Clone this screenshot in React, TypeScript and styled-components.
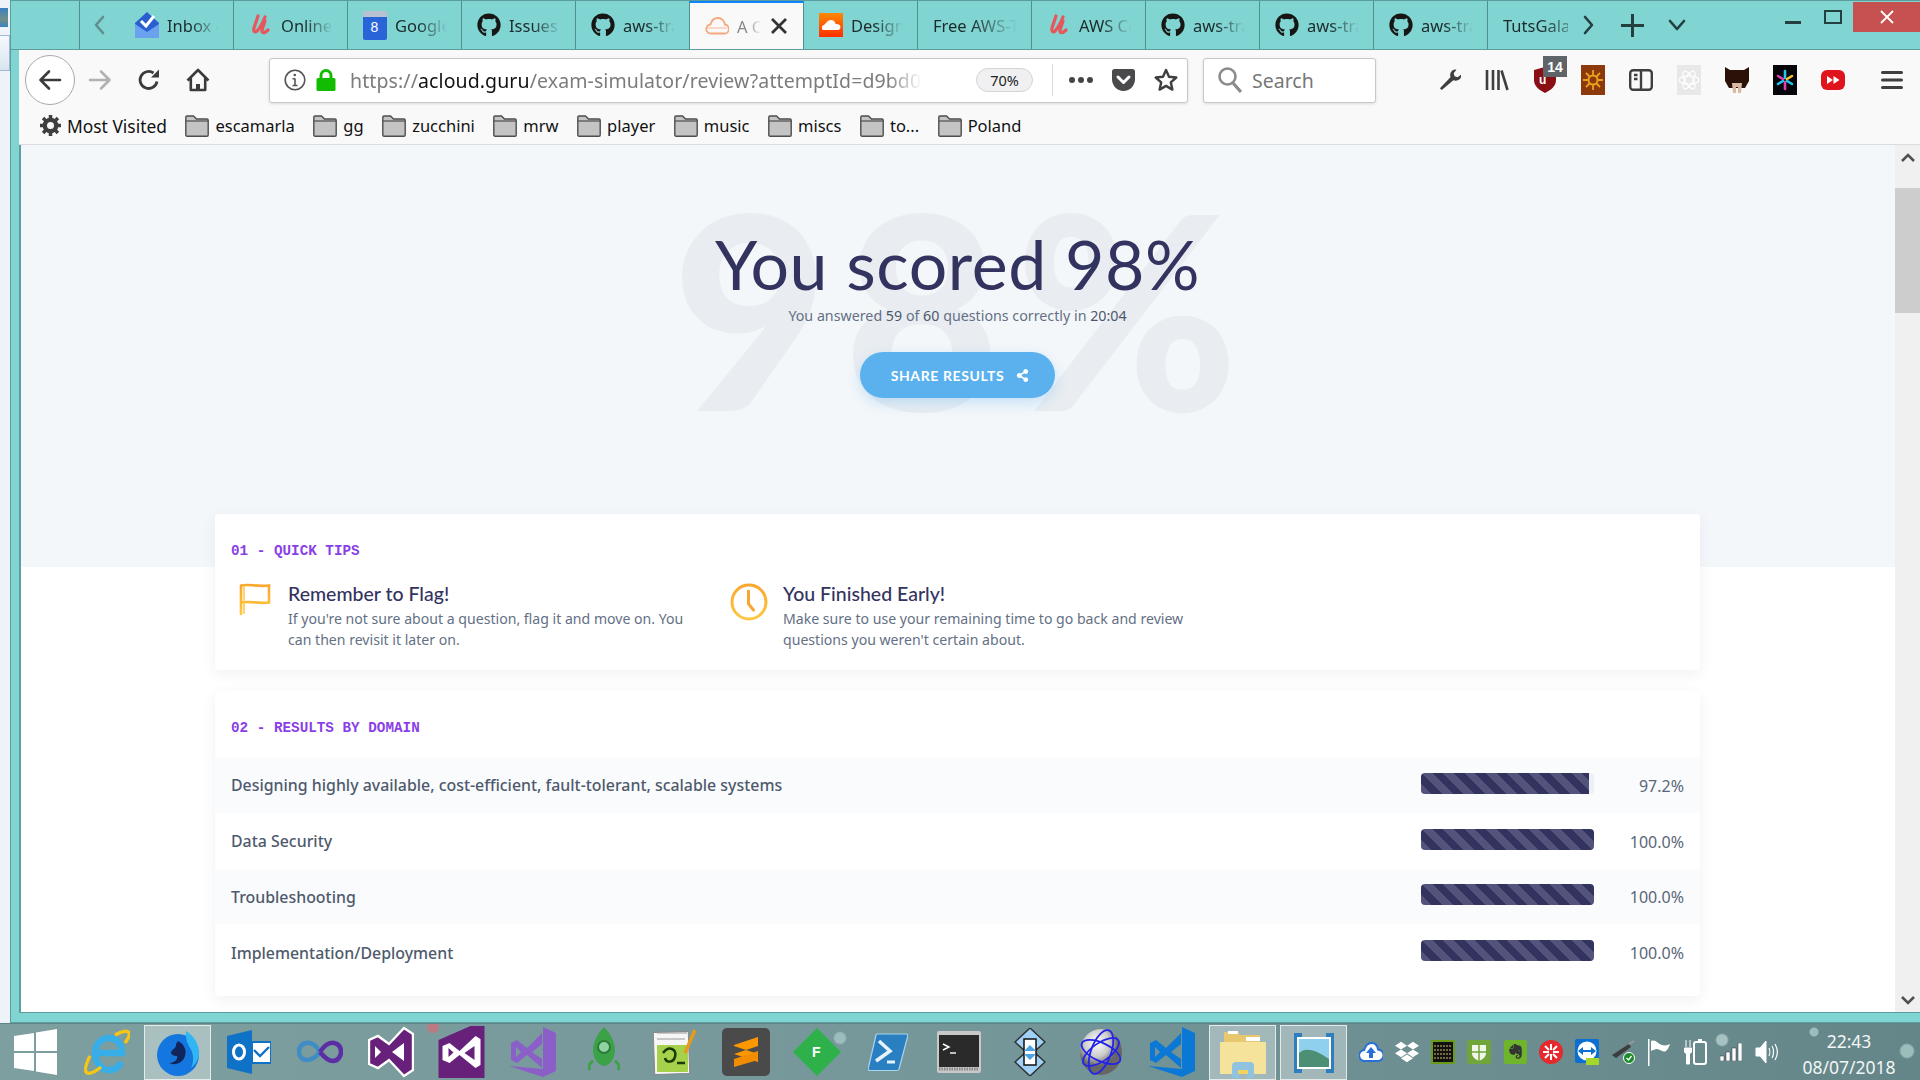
import React from "react";
import styled, { createGlobalStyle } from "styled-components";
import { FaGithub, FaEvernote, FaDropbox, FaShareAlt } from "react-icons/fa";

const Global = createGlobalStyle`
  html, body { margin: 0; padding: 0; height: 1080px; overflow: hidden; background: #7b9c9e; }
  * { box-sizing: border-box; }
  #root { width: 1920px; height: 1080px; }
`;

const UI = `"Noto Sans", "Open Sans", sans-serif`;
const HEAD = `Lato, "Noto Sans", sans-serif`;

const Desktop = styled.div`
  width: 1920px; height: 1080px; display: flex; flex-direction: column; overflow: hidden; font-family: ${UI};
`;
const Top = styled.div`flex: 0 0 1023px; display: flex; min-height: 0;`;
const Behind = styled.div`
  flex: 0 0 10px; background: #eef3fa; display: flex; flex-direction: column; gap: 8px; padding-top: 8px;
`;
const BehindIcon = styled.div`height: 19px; width: 8px; background: linear-gradient(#3a80c0, #6f8f88 60%, #3a80c0);`;
const BehindPanel = styled.div`height: 36px; width: 10px; background: linear-gradient(#f6f9fc, #d9e4f0); border: 1px solid #9fb8d6; border-left: 0;`;
const Win = styled.div`
  flex: 1; display: flex; flex-direction: column; background: #80d4d2; min-width: 0;
  border-left: 1px solid #5c9c9c; border-top: 1px solid #5c9c9c; border-bottom: 1px solid #5c9c9c;
`;
const Strip = styled.div`flex: 0 0 49px; display: flex; padding-left: 68px; position: relative; border-bottom: 1px solid #5c9c9c;`;
const ScrollBtn = styled.div`
  flex: 0 0 41px; border-left: 1px solid #4f8f90; display: flex; align-items: center; justify-content: center;
`;
const TabsClip = styled.div`flex: 0 0 1448px; display: flex; overflow: hidden;`;
const Tab = styled.div<{ $active?: boolean }>`
  flex: 0 0 114px; display: flex; align-items: center; gap: 8px; padding: 0 14px 0 15px; overflow: hidden;
  border-right: 1px solid #4f8f90;
  background: ${(p) => (p.$active ? "#f9f9fa" : "transparent")};
  border-top: ${(p) => (p.$active ? "3px solid #0a84ff" : "0")};
  margin-top: ${(p) => (p.$active ? "-1px" : "0")};
  position: relative;
`;
const TabText = styled.span<{ $active?: boolean }>`
  font-size: 16.5px; white-space: nowrap; overflow: hidden; flex: 1; color: ${(p) => (p.$active ? "#888" : "#1c2b2b")};
  -webkit-mask-image: linear-gradient(90deg, #000 45%, transparent 100%);
  mask-image: linear-gradient(90deg, #000 45%, transparent 100%);
`;
const TabTools = styled.div`display: flex; align-items: center; padding-left: 9px; gap: 22px;`;
const WinBtns = styled.div`margin-left: auto; display: flex; align-self: flex-start;`;
const WinBtn = styled.div<{ $w: number; $close?: boolean }>`
  width: ${(p) => p.$w}px; height: 30px; display: flex; align-items: center; justify-content: center; margin-top: 1px;
  background: ${(p) => (p.$close ? "#c75050" : "transparent")};
`;
const Body = styled.div`flex: 1; margin: 0 0 9px 8px; display: flex; flex-direction: column; background: #f9f9fa; min-height: 0; border-bottom: 1px solid #5c9c9c;`;
const NavBar = styled.div`flex: 0 0 54px; display: flex; align-items: center; padding-left: 6px; position: relative;`;
const BackCircle = styled.div`
  flex: 0 0 50px; height: 50px; border-radius: 50%; background: #fff; border: 1px solid #a9a9ab;
  display: flex; align-items: center; justify-content: center; margin-top: 5px;
`;
const NavIcons = styled.div`display: flex; align-items: center; margin-left: 13px; gap: 25px; width: 181px; margin-top: 5px;`;
const Field = styled.div<{ $w: number }>`
  flex: 0 0 ${(p) => p.$w}px; height: 45px; background: #fff; border: 1px solid #c8c8ca; border-radius: 3px; margin-top: 5px;
  display: flex; align-items: center; box-shadow: 0 1px 3px rgba(0,0,0,.12);
`;
const UrlIcons = styled.div`display: flex; align-items: center; gap: 10px; margin-left: 14px;`;
const UrlText = styled.div`
  font-size: 19.5px; margin-left: 14px; width: 572px; overflow: hidden; white-space: nowrap; color: #7c7c7f; letter-spacing: .1px;
  -webkit-mask-image: linear-gradient(90deg, #000 94%, transparent 100%);
  mask-image: linear-gradient(90deg, #000 94%, transparent 100%);
`;
const UrlHost = styled.span`color: #111;`;
const Zoom = styled.div`
  margin-left: 54px; flex: 0 0 57px; height: 24px; border-radius: 12px; background: #f0f0f2; border: 1px solid #d4d4d6;
  font-size: 14.5px; display: flex; align-items: center; justify-content: center; color: #222;
`;
const VDivider = styled.div`flex: 0 0 1px; height: 32px; background: #dcdcde; margin: 0 16px 0 19px;`;
const UrlTail = styled.div`display: flex; align-items: center; gap: 18px;`;
const SearchLabel = styled.span`font-size: 19.5px; color: #777;`;
const SearchGap = styled.div`width: 15px;`;
const ToolIcons = styled.div`display: flex; margin-left: 63px; width: 437px; align-items: center; gap: 24px;`;
const ToolWrap = styled.div`position: relative; width: 24px; height: 30px; display: flex; align-items: center; justify-content: center; margin-top: 5px;`;
const Badge = styled.span`
  position: absolute; left: 10px; top: -9px; width: 24px; height: 21px; background: #5f6468; color: #fff;
  font: bold 14px "Liberation Sans", sans-serif; display: flex; align-items: center; justify-content: center;
`;
const ToolSep = styled.div`width: 1px; height: 50px; background: #e4e4e6; margin-left: -8px; margin-right: -4px; margin-top: 4px;`;
const BookBar = styled.div`
  flex: 0 0 40px; display: flex; align-items: center; padding: 2px 0 0 21px; gap: 18.5px; border-bottom: 1px solid #dcdcde;
`;
const Book = styled.div`display: flex; align-items: center; gap: 6px; font-size: 16.5px; color: #111;`;
const MostVisited = styled(Book)`font-size: 17.4px;`;

const View = styled.div`flex: 1; display: flex; min-height: 0; background: #fff; border-left: 2px solid #5f9ea0;`;
const Page = styled.div`flex: 1; min-width: 0; overflow: hidden; display: flex; flex-direction: column; padding-right: 1px;`;
const Hero = styled.div`
  flex: 0 0 422px; margin-right: -1px; background: #f4f7fa; position: relative; display: flex; flex-direction: column; align-items: center; overflow: hidden;
  padding: 79px 1px 0 0;
`;
const Ghost = styled.div`
  position: absolute; left: 651px; top: 27px; font: 900 270px/1 ${HEAD}; color: #e9edf1; white-space: nowrap; letter-spacing: 15px;
`;
const Title = styled.h1`
  position: relative; margin: 0; font: 400 68px/80px ${HEAD}; color: #33335f; height: 80px; white-space: nowrap; letter-spacing: .6px;
`;
const Sub = styled.p`position: relative; margin: .5px 0 0; font-size: 14.25px; line-height: 22px; color: #647084;`;
const SubStrong = styled.span`color: #4d586b;`;
const Share = styled.div`
  position: relative; margin-top: 25.5px; width: 195px; height: 46px; border-radius: 23px; background: #5ab1ee; color: #fff;
  box-shadow: 0 5px 14px rgba(90,177,238,.3); padding-left: 5px;
  font: 700 14px ${HEAD}; letter-spacing: .6px; display: flex; align-items: center; justify-content: center; gap: 12px;
`;
const Cards = styled.div`width: 1485px; align-self: center; margin-top: -53px; display: flex; flex-direction: column; gap: 21px; position: relative;`;
const Card = styled.section<{ $h: number }>`
  height: ${(p) => p.$h}px; flex: none; background: #fff; border-radius: 4px; box-shadow: 0 4px 14px rgba(40,50,80,.07); padding-top: 27px;
`;
const Label = styled.h2`
  margin: 0 0 0 16px; font: 700 14.3px/20px "Liberation Mono", monospace; color: #8a3fe6; white-space: pre;
`;
const Tips = styled.div`display: grid; grid-template-columns: 495px 495px; padding-left: 16px; margin-top: 19px;`;
const Tip = styled.div`display: grid; grid-template-columns: 57px 1fr;`;
const TipIcon = styled.div<{ $right: number }>`display: flex; justify-content: flex-end; padding: 3px ${(p) => p.$right}px 0 0;`;
const TipHead = styled.div`font: 500 19.5px/26px ${HEAD}; color: #33335f; white-space: nowrap; margin-top: 1px;`;
const TipBody = styled.div`font-size: 14.1px; line-height: 21px; color: #647084; white-space: nowrap; margin-top: 1px;`;
const Rows = styled.div`margin-top: 19px;`;
const Row = styled.div<{ $odd: boolean }>`
  height: 55.75px; display: flex; align-items: center; padding: 0 16px; background: ${(p) => (p.$odd ? "#fafbfd" : "#fff")};
`;
const RowName = styled.div`flex: 1; font-size: 15.9px; font-weight: 500; color: #4e5a6c; padding-top: 1px;`;
const Track = styled.div`flex: 0 0 173px; height: 21px; border-radius: 4px; background: #eef0f5; overflow: hidden; margin-top: -3px;`;
const Fill = styled.div`
  height: 100%;
  background: repeating-linear-gradient(45deg, #53537b 0, #53537b 7.56px, #33335f 7.56px, #33335f 15.12px);
`;
const Pct = styled.div`flex: 0 0 90px; text-align: right; font-size: 16px; color: #5a6678; padding-top: 2px;`;

const Scroll = styled.div`flex: 0 0 25px; background: #f0f0f0; display: flex; flex-direction: column; align-items: center; justify-content: space-between; position: relative;`;
const ScrollArrow = styled.div`height: 25px; display: flex; align-items: center; justify-content: center;`;
const Thumb = styled.div`position: absolute; left: 0; right: 0; top: 43px; height: 125px; background: #cdcdcd;`;

const Taskbar = styled.div`
  flex: 0 0 57px; display: flex; align-items: stretch; position: relative; border-top: 1px solid #5e8486;
  background:
    radial-gradient(circle at 1722px 16px, #a6c2c2 0 5px, transparent 7px),
    radial-gradient(circle at 1814px 8px, #9dbcbc 0 4px, transparent 5px),
    radial-gradient(circle at 1907px 27px, #9dbcbc 0 6px, transparent 8px),
    radial-gradient(circle at 840px 14px, #9dbcbc 0 5px, transparent 7px),
    radial-gradient(circle at 433px 3px, #b87b84 0 5px, transparent 7px),
    linear-gradient(90deg, #7e9f9f, #75979a 50%, #648688);
`;
const Slot = styled.div<{ $on?: boolean }>`
  flex: 0 0 71px; display: flex; align-items: center; justify-content: center; margin: 0;
  ${(p) => p.$on ? "background: rgba(255,255,255,.35); box-shadow: inset 0 0 0 1px rgba(255,255,255,.7); margin: 1px 2px 0; flex-basis: 67px;" : ""}
`;
const Tray = styled.div`display: flex; align-items: center; margin-left: 4px;`;
const TraySlot = styled.div`flex: 0 0 36px; display: flex; align-items: center; justify-content: center;`;
const Clock = styled.div`
  flex: 1; text-align: center; color: #f2f6f6; font-size: 17.5px; line-height: 26px; padding: 4px 7px 0 0; white-space: nowrap;
`;

const Arrow = ({ c = "#3b3b3d", flip = false, s = 24 }: { c?: string; flip?: boolean; s?: number }) => (
  <svg width={s} height={s} viewBox="0 0 24 24" fill="none" stroke={c} strokeWidth="2.6" strokeLinecap="round" strokeLinejoin="round" style={flip ? { transform: "scaleX(-1)" } : undefined}>
    <path d="M22 12H2.5M11 3.5 2.5 12l8.5 8.5" />
  </svg>
);
const Reload = () => (
  <svg width="24" height="24" viewBox="0 0 24 24" fill="none" stroke="#3b3b3d" strokeWidth="2.8">
    <path d="M20 13.5A8.5 8.5 0 1 1 16.5 5" />
    <path d="M22 1.5v8h-8z" fill="#3b3b3d" stroke="none" />
  </svg>
);
const Home = () => (
  <svg width="24" height="24" viewBox="0 0 24 24" fill="none" stroke="#3b3b3d" strokeWidth="2.6" strokeLinejoin="round">
    <path d="M1.5 12.5 12 2l10.5 10.5M4.8 10v12h14.4V10" />
    <rect x="10" y="16" width="4" height="6" fill="#3b3b3d" stroke="none" />
  </svg>
);
const Folder = () => (
  <svg width="24" height="24" viewBox="0 0 24 24">
    <path d="M.8 21V3.2c0-.8.5-1.2 1.2-1.2h6.5l3 3H22c.8 0 1.2.5 1.2 1.2V21c0 .8-.5 1.2-1.2 1.2H2c-.8 0-1.2-.5-1.2-1.2z" fill="#c4c4c4" stroke="#4d4d4d" strokeWidth="1.4" />
    <path d="M1 7h22" stroke="#4d4d4d" strokeWidth="1.2" />
  </svg>
);
const Gear = () => (
  <svg width="21" height="21" viewBox="0 0 24 24" fill="none" stroke="#3f3f41" strokeWidth="5">
    <circle cx="12" cy="12" r="6.5" />
    <path strokeWidth="4" d="M12 0v5M12 19v5M0 12h5M19 12h5M3.5 3.5l3.5 3.5M17 17l3.5 3.5M3.5 20.5 7 17M17 7l3.5-3.5" />
  </svg>
);
const Info = () => (
  <svg width="22" height="22" viewBox="0 0 22 22" fill="none" stroke="#555" strokeWidth="1.6">
    <circle cx="11" cy="11" r="9.8" />
    <path d="M11 9.5v7M8.5 9.7H11M8.5 16.5h5" />
    <circle cx="10.8" cy="6" r="1.3" fill="#555" stroke="none" />
  </svg>
);
const Lock = () => (
  <svg width="20" height="22" viewBox="0 0 20 22">
    <path d="M5 10V6.5a5 5 0 0 1 10 0V10" fill="none" stroke="#12bc00" strokeWidth="3" />
    <rect x="0.5" y="9" width="19" height="13" rx="1.5" fill="#12bc00" />
  </svg>
);
const Dots = () => (
  <svg width="24" height="6" viewBox="0 0 24 6" fill="#444"><circle cx="3" cy="3" r="3" /><circle cx="12" cy="3" r="3" /><circle cx="21" cy="3" r="3" /></svg>
);
const Pocket = () => (
  <svg width="25" height="24" viewBox="0 0 25 24">
    <path d="M1 3.5C1 2 2 1 3.5 1h18C23 1 24 2 24 3.5V11c0 6.5-5 12-11.5 12S1 17.5 1 11z" fill="#4a4a4d" />
    <path d="M7 9l5.5 5.5L18 9" fill="none" stroke="#fff" strokeWidth="3" strokeLinecap="round" strokeLinejoin="round" />
  </svg>
);
const Star = () => (
  <svg width="24" height="24" viewBox="0 0 24 24" fill="none" stroke="#3f3f41" strokeWidth="2.4" strokeLinejoin="round">
    <path d="m12 2 3 6.8 7.3.7-5.5 4.9 1.6 7.2L12 17.9l-6.4 3.7 1.6-7.2L1.7 9.5 9 8.8z" />
  </svg>
);
const Magnifier = () => (
  <svg width="24" height="26" viewBox="0 0 24 26" fill="none" stroke="#8b8b8e" strokeWidth="2.6">
    <circle cx="9.5" cy="9.5" r="8" />
    <path d="m15 16 8 9" strokeWidth="3.2" />
  </svg>
);
const Wrench = () => (
  <svg width="22" height="24" viewBox="0 0 24 24" fill="#3f3f41">
    <path d="M3 23 1 21l11.5-12c-.8-3 0-5.8 2-7.3 1.5-1 3-1.3 4.5-1l-3 4 1 3.3 3.3 1 4-3c.3 2-.3 3.8-1.6 5-1.9 1.7-4.6 2.2-7 1.3z" />
  </svg>
);
const Library = () => (
  <svg width="24" height="24" viewBox="0 0 24 24" stroke="#3f3f41" strokeWidth="2.6" fill="none">
    <path d="M2 2v20M8 2v20M13.5 2v20M16.5 2.5 22.5 22" />
  </svg>
);
const UBlock = () => (
  <svg width="24" height="26" viewBox="0 0 24 26">
    <path d="M1 3 12 0l11 3v10c0 6-5 10-11 13C6 23 1 19 1 13z" fill="#8a0f12" />
    <text x="6" y="17" fontSize="12" fontWeight="700" fill="#fff" fontFamily="Liberation Sans">u</text>
  </svg>
);
const Sun = () => (
  <svg width="24" height="30" viewBox="0 0 24 30">
    <rect width="24" height="30" fill="#8c3a0c" />
    <circle cx="12" cy="15" r="4.5" fill="none" stroke="#eaa01e" strokeWidth="2" />
    <path d="M12 5v5M12 20v5M2 15h5M17 15h5M5 8l3.5 3.5M15.5 18.5 19 22M5 22l3.5-3.5M15.5 11.5 19 8" stroke="#eaa01e" strokeWidth="1.8" />
  </svg>
);
const Sidebar = () => (
  <svg width="24" height="22" viewBox="0 0 24 22" fill="none" stroke="#3f3f41" strokeWidth="2.4">
    <rect x="1.2" y="1.2" width="21.6" height="19.6" rx="3" />
    <path d="M12 1.5v19M5 6h3.5M5 10h3.5" />
  </svg>
);
const ReactIco = () => (
  <svg width="24" height="30" viewBox="0 0 24 30" fill="none">
    <rect width="24" height="30" fill="#e8e8e8" />
    <g stroke="#fff" strokeWidth="1.2"><ellipse cx="12" cy="15" rx="10" ry="4" /><ellipse cx="12" cy="15" rx="10" ry="4" transform="rotate(60 12 15)" /><ellipse cx="12" cy="15" rx="10" ry="4" transform="rotate(120 12 15)" /></g>
  </svg>
);
const Cat = () => (
  <svg width="24" height="26" viewBox="0 0 24 26">
    <path d="M0 0l5 3h14l5-3v14l-4 7H4L0 14z" fill="#2a1208" />
    <path d="M7 16h10l-1 10h-3v-6h-2v6H8z" fill="#d9b9a3" />
  </svg>
);
const Spark = () => (
  <svg width="24" height="30" viewBox="0 0 24 30">
    <rect width="24" height="30" fill="#05050a" />
    <g strokeWidth="2.6" strokeLinecap="round">
      <path d="M12 6v7" stroke="#22c7ee" /><path d="M12 17v7" stroke="#e23fb0" /><path d="M5 11l5 3" stroke="#e23fb0" /><path d="M14 16l5 3" stroke="#22c7ee" /><path d="M5 19l5-3" stroke="#22c7ee" /><path d="M14 14l5-3" stroke="#f2c230" />
    </g>
  </svg>
);
const YT = () => (
  <svg width="24" height="24" viewBox="0 0 24 24">
    <rect y="2" width="24" height="20" rx="6" fill="#e0141c" />
    <path d="M6 8l6 4-6 4zM12.5 8l6 4-6 4z" fill="#fff" />
  </svg>
);
const Burger = () => (
  <svg width="22" height="20" viewBox="0 0 22 20" fill="#3f3f41"><rect width="22" height="3" rx="1.5" y="1" /><rect width="22" height="3" rx="1.5" y="8.5" /><rect width="22" height="3" rx="1.5" y="16" /></svg>
);
const Chevron = ({ dir }: { dir: "l" | "r" | "d" }) => (
  <svg width="22" height="22" viewBox="0 0 22 22" fill="none" stroke={dir === "l" ? "#5f8f90" : "#233f40"} strokeWidth="2.6" strokeLinecap="round" strokeLinejoin="round">
    <path d={dir === "l" ? "M14 3 7 11l7 8" : dir === "r" ? "M8 3l7 8-7 8" : "M4 7l7 8 7-8"} />
  </svg>
);
const Plus = () => (
  <svg width="23" height="23" viewBox="0 0 23 23" stroke="#233f40" strokeWidth="3"><path d="M11.5 0v23M0 11.5h23" /></svg>
);
const FlagIcon = () => (
  <svg width="33" height="33" viewBox="0 0 33 33" fill="none" strokeWidth="2.6" strokeLinecap="round">
    <defs><linearGradient id="og" x1="0" y1="0" x2="0" y2="1"><stop offset="0" stopColor="#f9a62e" /><stop offset="1" stopColor="#fdc843" /></linearGradient></defs>
    <path d="M3 31V2.5M3 2.5c9-2 14 1.5 28 0v17c-12 1.5-18-2-28 0" stroke="url(#og)" />
    <path d="M6 2.5v28" stroke="#fdc843" strokeWidth="1.5" />
  </svg>
);
const ClockIcon = () => (
  <svg width="38" height="38" viewBox="0 0 38 38" fill="none" strokeWidth="3" strokeLinecap="round">
    <defs><linearGradient id="og2" x1="0" y1="0" x2="0" y2="1"><stop offset="0" stopColor="#f9a62e" /><stop offset="1" stopColor="#fdc843" /></linearGradient></defs>
    <circle cx="19" cy="19" r="17" stroke="url(#og2)" />
    <path d="M18.5 8v13l5 6" stroke="#f9a62e" />
  </svg>
);

const Inbox = () => (
  <svg width="24" height="26" viewBox="0 0 24 26">
    <path d="M0 11 12 0l12 11v15H0z" fill="#2a5fd0" />
    <path d="M0 12l12 8 12-8v14H0z" fill="#6ba2f0" />
    <path d="M6 9l5 5 8-10" fill="none" stroke="#fff" strokeWidth="3" />
  </svg>
);
const Guru = () => (
  <svg width="24" height="24" viewBox="0 0 24 24" fill="none" stroke="#e8555a" strokeWidth="3.2" strokeLinecap="round">
    <path d="M9 3 5 15c-1 3 1 5 3 3 3-3 6-9 8-14M16 8l-3 9c-.5 3 2 4 6 0" />
  </svg>
);
const Cal = () => (
  <svg width="24" height="30" viewBox="0 0 24 30">
    <rect y="1" width="24" height="29" rx="2" fill="#2a65d8" />
    <rect y="1" width="24" height="6" fill="#b9c2d0" />
    <text x="7.5" y="22" fontSize="14" fill="#fff" fontFamily="Liberation Sans">8</text>
  </svg>
);
const Git = () => <FaGithub size={24} color="#161614" />;
const CloudLogo = () => (
  <svg width="24" height="20" viewBox="0 0 24 20" fill="none" stroke="#f6a77c" strokeWidth="1.8">
    <path d="M6 17.5a4.5 4.5 0 0 1-.5-9C6.5 4.5 9.5 2 13 2c3.8 0 6.5 3 6.8 6.5a4.5 4.5 0 0 1-1 9z" />
    <path d="M2 12h20" stroke="#f8c2a8" strokeWidth="1.2" />
  </svg>
);
const Sound = () => (
  <svg width="24" height="24" viewBox="0 0 24 24">
    <defs><linearGradient id="sc" x1="0" y1="0" x2="0" y2="1"><stop offset="0" stopColor="#ff8a00" /><stop offset="1" stopColor="#ff2f00" /></linearGradient></defs>
    <rect width="24" height="24" fill="url(#sc)" />
    <path d="M3 16v-3l2-1 2-2c2-3 6-4 8-2 1 1 1.5 2 1.5 3 2-.5 5 .5 5 3s-2 3-3 3H4z" fill="#fff" />
  </svg>
);
const Cross = () => (
  <svg width="20" height="20" viewBox="0 0 20 20" stroke="#333" strokeWidth="2.8"><path d="M3 3l14 14M17 3 3 17" /></svg>
);

const Win8 = () => (
  <svg width="43" height="46" viewBox="0 0 43 46" fill="#fff"><path d="M0 7l20-3v18H0zM22 3.5 43 0v22H22zM0 24h20v18L0 39zM22 24h21v22l-21-3.5z" /></svg>
);
const IE = () => (
  <svg width="46" height="48" viewBox="0 0 46 48" fill="none">
    <path d="M13 25h25c0-10-6-15-13-15s-14 6-14 15 6 17 14 17c6 0 10-3 12-8" stroke="#38aee8" strokeWidth="6.5" />
    <path d="M31 7c7-4 13-5 14-2 1 2-1 6-4 10M6 28C2 36 0 43 3 45c3 1 8-1 14-6" stroke="#f5c518" strokeWidth="3.4" />
  </svg>
);
const FFNightly = () => (
  <svg width="44" height="48" viewBox="0 0 44 48">
    <ellipse cx="22" cy="26" rx="21" ry="21" fill="#1477e0" />
    <path d="M30 2c8 5 13 13 13 22 0 6-3 11-8 15 3-6 3-14-1-20-2-4-5-9-4-17z" fill="#30b5f5" />
    <path d="M22 12c6 3 9 9 7 15-2 7-10 10-16 7 6 0 9-4 8-7-3 0-6-1-6-4 2-3 5-4 5-7 0-1 1-3 2-4z" fill="#12245c" />
  </svg>
);
const Outlook = () => (
  <svg width="44" height="44" viewBox="0 0 44 44">
    <path d="M0 6 25 0v44L0 38z" fill="#0f72c6" />
    <ellipse cx="12" cy="22" rx="5.5" ry="7" fill="none" stroke="#fff" strokeWidth="3" />
    <rect x="25" y="12" width="19" height="21" fill="#fff" stroke="#0f72c6" strokeWidth="2" />
    <path d="M27 20l6 6 9-9" fill="none" stroke="#0f72c6" strokeWidth="2.4" />
  </svg>
);
const Infinity8 = () => (
  <svg width="46" height="26" viewBox="0 0 46 26" fill="none" strokeWidth="4.5">
    <path d="M23 13C19 6 14 3 9 4 4 5 2 9 2 13s3 8 8 8 9-3 13-8" stroke="#3f8dc4" />
    <path d="M23 13c4-6 9-10 14-9 5 1 7 5 7 9s-3 9-8 9-9-4-13-9" stroke="#5b2ea6" />
  </svg>
);
const VS = () => (
  <svg width="46" height="52" viewBox="0 0 46 52">
    <path d="M1 14 10 10l11 8L36 2l9 6v36l-9 6-15-16-11 8-9-4z" fill="#68217a" stroke="#fff" strokeWidth="2.4" />
    <path d="M7 20v12l6-6zM24 26l12 9V17z" fill="#fff" />
  </svg>
);
const VSBox = () => (
  <svg width="47" height="52" viewBox="0 0 46 52">
    <path d="M0 14 32 0h14v52H0z" fill="#68217a" />
    <path d="M4 20l7-3 10 8L37 10l5 3v26l-5 3L21 29l-10 8-7-3z" fill="#fff" />
    <path d="M10 22v9l5-4.5zM26 27l10 7V20z" fill="#68217a" />
  </svg>
);
const VSFlat = ({ c }: { c: string }) => (
  <svg width="48" height="50" viewBox="0 0 48 50" fill={c}>
    <path d="M34 0 47 6v38l-13 6L0 39l34 3z" />
    <path fillRule="evenodd" d="M33 6 18 21 8 13 2 16v17l6 3 10-8 15 13V32L23 25l10-8zM7 20v10l5-5z" />
  </svg>
);
const GreenRocket = () => (
  <svg width="32" height="50" viewBox="0 0 32 50">
    <path d="M16 0c7 7 11 16 11 23s-4 15-11 16C9 38 5 30 5 23S9 7 16 0z" fill="#3ba247" />
    <circle cx="16" cy="20" r="6" fill="#8fd3a0" stroke="#2d7a3a" strokeWidth="2" />
    <path d="M5 34c-4 2-5 6-3 9M27 34c4 2 5 6 3 9" fill="none" stroke="#3ba247" strokeWidth="3" />
  </svg>
);
const Notepad = () => (
  <svg width="44" height="46" viewBox="0 0 44 46">
    <rect x="1" y="3" width="35" height="42" fill="#f6f6f6" stroke="#888" transform="rotate(-2 18 24)" />
    <rect x="4" y="16" width="31" height="27" fill="#a5d24a" />
    <path d="M10 24c6-8 14-4 12 4-2 6-9 6-10 1M24 34h8" stroke="#1a3a0a" strokeWidth="2.5" fill="none" />
    <path d="M4 4h30M4 10h28" stroke="#999" strokeWidth="1" />
    <path d="M42 1 32 24" stroke="#e69a20" strokeWidth="3.5" />
  </svg>
);
const Sublime = () => (
  <svg width="48" height="48" viewBox="0 0 48 48">
    <rect width="48" height="48" rx="5" fill="#4a4a4a" />
    <path d="M12 17 36 9v9l-24 8zM12 26l24 8v-8L12 18z" fill="#ff9800" />
    <path d="M12 31l24-8v9l-24 7z" fill="#f28c00" />
  </svg>
);
const Diamond = () => (
  <svg width="48" height="48" viewBox="0 0 48 48">
    <path d="M24 0 48 24 24 48 0 24z" fill="#2eb14a" />
    <text x="19" y="29" fontSize="14" fontWeight="700" fill="#fff" fontFamily="Liberation Sans">F</text>
  </svg>
);
const PowerShell = () => (
  <svg width="40" height="40" viewBox="0 0 40 40">
    <path d="M9 2h29c1.5 0 2 1 1.8 2L31 37c-.2 1-1 1.5-2 1.5H2c-1.5 0-2-1-1.8-2L8 3c.2-.7.5-1 1-1z" fill="#2a7fc1" stroke="#a8d4ef" strokeWidth="1.2" />
    <path d="M11 9l11 10-14 10" fill="none" stroke="#e6f3fc" strokeWidth="3.5" />
    <path d="M19 30h8" stroke="#e6f3fc" strokeWidth="3" />
  </svg>
);
const Terminal = () => (
  <svg width="44" height="42" viewBox="0 0 44 42">
    <rect width="44" height="42" rx="2" fill="#c8c8c8" />
    <rect x="2" y="4" width="40" height="32" fill="#2a2a2a" />
    <path d="M6 13l6 3-6 3" fill="none" stroke="#fff" strokeWidth="1.4" />
    <path d="M13 22h6" stroke="#fff" strokeWidth="1.4" />
    <path d="M2 38h40" stroke="#8a8a8a" strokeWidth="3" strokeDasharray="1.5 1" />
  </svg>
);
const BlueSplit = () => (
  <svg width="32" height="48" viewBox="0 0 32 48">
    <path d="M16 0 31 14 20 24l11 10-15 14L1 34l11-10L1 14z" fill="#9fd0f5" stroke="#303030" strokeWidth="1.5" />
    <rect x="10" y="11" width="12" height="26" fill="#fff" stroke="#111" strokeWidth="1.5" />
    <path d="M16 17l6 6H10zM16 32l-6-6h12z" fill="#4aa3e0" />
  </svg>
);
const Globe = () => (
  <svg width="46" height="50" viewBox="0 0 46 50" fill="none">
    <defs><radialGradient id="gl" cx=".4" cy=".3"><stop offset="0" stopColor="#fff" /><stop offset=".6" stopColor="#ccc" /><stop offset="1" stopColor="#666" /></radialGradient></defs>
    <ellipse cx="23" cy="25" rx="21" ry="23" fill="url(#gl)" />
    <g stroke="#2424e6" strokeWidth="1.8">
      <ellipse cx="23" cy="25" rx="21" ry="9" transform="rotate(25 23 25)" />
      <ellipse cx="23" cy="25" rx="21" ry="9" transform="rotate(-35 23 25)" />
      <ellipse cx="23" cy="25" rx="10" ry="23" transform="rotate(20 23 25)" />
    </g>
  </svg>
);
const FolderBig = () => (
  <svg width="46" height="50" viewBox="0 0 46 50">
    <path d="M4 4h14l2 3h20v8H4z" fill="#e7c86e" />
    <rect x="8" y="3" width="10" height="3" fill="#fff" />
    <rect x="26" y="9" width="14" height="4" fill="#fff" />
    <path d="M0 14h46v32H0z" fill="#f5e39b" />
    <path d="M12 50V38c0-2 1-4 4-4h14c3 0 4 2 4 4v12h-7v-7h-8v7z" fill="#8fc3e0" />
    <path d="M18 42h10v4H18z" fill="#f2d35e" />
  </svg>
);
const Photos = () => (
  <svg width="46" height="44" viewBox="0 0 46 44">
    <path d="M3 2h8v6H8v28h3v6H3zM43 2h-8v6h3v28h-3v6h8z" fill="#2f7fbf" />
    <rect x="6" y="6" width="34" height="32" fill="#fff" />
    <rect x="8" y="8" width="30" height="28" fill="#8ed0ee" />
    <path d="M8 22c6-6 16-4 30 6v8H8z" fill="#4c8f74" />
  </svg>
);

const TrayCloud = () => (
  <svg width="24" height="20" viewBox="0 0 24 20">
    <path d="M6 19a5.5 5.5 0 0 1-.8-11C6.5 3.5 9 1 12.5 1c3.5 0 6 2.5 6.5 6.5a5.5 5.5 0 0 1-.5 11.5z" fill="#fff" stroke="#2870d8" strokeWidth="2" />
    <path d="M12 5l5 6h-3v5h-4v-5H7z" fill="#2870d8" />
  </svg>
);
const Eq = () => (
  <svg width="24" height="24" viewBox="0 0 24 24">
    <rect width="24" height="24" fill="#6a9b18" />
    <rect x="2" y="2" width="20" height="20" fill="#111" />
    <path d="M3 6h18M3 10h18M3 14h18M3 18h18" stroke="#d8c070" strokeWidth="1.2" strokeDasharray="2 1" />
  </svg>
);
const Shield = () => (
  <svg width="24" height="24" viewBox="0 0 24 24">
    <rect width="24" height="24" rx="2" fill="#6fa53a" />
    <path d="M5 5h14v8c0 4-3 6-7 8-4-2-7-4-7-8z" fill="#f2f6e8" />
    <path d="M12 5v16M5 12h14" stroke="#6fa53a" strokeWidth="1.5" />
  </svg>
);
const Ever = () => (
  <svg width="23" height="24" viewBox="0 0 23 24">
    <rect width="23" height="24" rx="2" fill="#6eb52b" />
    <g transform="translate(3 3)"><FaEvernote size={17} color="#333" /></g>
  </svg>
);
const RedBurst = () => (
  <svg width="24" height="24" viewBox="0 0 24 24">
    <circle cx="12" cy="12" r="12" fill="#e7282c" />
    <path d="M12 4v6M12 14v6M4 12h6M14 12h6M6 6l4 4M14 14l4 4M6 18l4-4M14 10l4-4" stroke="#fff" strokeWidth="2" />
  </svg>
);
const Team = () => (
  <svg width="24" height="27" viewBox="0 0 24 27">
    <rect width="24" height="24" rx="2" fill="#0a6fd0" />
    <circle cx="12" cy="12" r="9.5" fill="#fff" />
    <path d="M3 12l5-4v3h8V8l5 4-5 4v-3H8v3z" fill="#0a6fd0" />
    <rect x="11" y="19" width="13" height="7" fill="#a5d62a" />
  </svg>
);
const Usb = () => (
  <svg width="24" height="24" viewBox="0 0 24 24">
    <path d="M1 15 18 4l2 3L5 18z" fill="#3d3d3d" />
    <path d="M18 4l5-3" stroke="#999" strokeWidth="2" />
    <circle cx="18" cy="18" r="5.5" fill="#1a8a2a" stroke="#fff" />
    <path d="M15.5 18l2 2 3-4" stroke="#fff" strokeWidth="1.3" fill="none" />
  </svg>
);
const TrayFlag = () => (
  <svg width="24" height="27" viewBox="0 0 24 27" fill="#fff"><path d="M1 0h1.5v27H1zM4 2c5-2 7 3 11 4 3 1 6 0 8-1-1 3-2 5-4 7-3 2-6-2-9-2-2 0-4 1-6 2z" /></svg>
);
const Battery = () => (
  <svg width="23" height="26" viewBox="0 0 23 26" fill="none" stroke="#fff" strokeWidth="2">
    <rect x="10" y="3" width="12" height="22" rx="2" />
    <path d="M14 1h4" strokeWidth="2.5" />
    <path d="M2 1v7M6 1v7M0.5 9h7v4l-2 2v10h-3V15l-2-2z" fill="#fff" strokeWidth="1" />
  </svg>
);
const Signal = () => (
  <svg width="22" height="18" viewBox="0 0 22 18" fill="#fff" stroke="#334" strokeWidth=".5"><rect y="13" width="4" height="5" /><rect x="6" y="9" width="4" height="9" /><rect x="12" y="5" width="4" height="13" /><rect x="18" y="0" width="4" height="18" /></svg>
);
const Speaker = () => (
  <svg width="24" height="24" viewBox="0 0 24 24" fill="#fff" stroke="#fff"><path d="M1 8h4l6-7v22l-6-7H1z" /><path d="M14 8c1 2 1 6 0 8M17 6c2 3 2 9 0 12M20 4c3 5 3 11 0 16" fill="none" strokeWidth="1.2" /></svg>
);

type TabD = { t: string; i?: React.ReactNode; active?: boolean };
const tabs: TabD[] = [
  { t: "Inbox - Gmail", i: <Inbox /> },
  { t: "Online courses", i: <Guru /> },
  { t: "Google Calendar", i: <Cal /> },
  { t: "Issues · aws", i: <Git /> },
  { t: "aws-training", i: <Git /> },
  { t: "A C", i: <CloudLogo />, active: true },
  { t: "Designing", i: <Sound /> },
  { t: "Free AWS-Training" },
  { t: "AWS Certified", i: <Guru /> },
  { t: "aws-training", i: <Git /> },
  { t: "aws-training", i: <Git /> },
  { t: "aws-training", i: <Git /> },
  { t: "TutsGalaxy - Free" },
];
const books = ["escamarla", "gg", "zucchini", "mrw", "player", "music", "miscs", "to...", "Poland"];
const domains: [string, number][] = [
  ["Designing highly available, cost-efficient, fault-tolerant, scalable systems", 97.2],
  ["Data Security", 100],
  ["Troubleshooting", 100],
  ["Implementation/Deployment", 100],
];
const apps: { n: React.ReactNode; on?: boolean }[] = [
  { n: <Win8 /> }, { n: <IE /> }, { n: <FFNightly />, on: true }, { n: <Outlook /> }, { n: <Infinity8 /> }, { n: <VS /> }, { n: <VSBox /> },
  { n: <VSFlat c="#8a5fc8" /> }, { n: <GreenRocket /> }, { n: <Notepad /> }, { n: <Sublime /> }, { n: <Diamond /> }, { n: <PowerShell /> },
  { n: <Terminal /> }, { n: <BlueSplit /> }, { n: <Globe /> }, { n: <VSFlat c="#0a78d4" /> }, { n: <FolderBig />, on: true }, { n: <Photos />, on: true },
];
const tray = [<TrayCloud />, <FaDropbox size={24} color="#fff" />, <Eq />, <Shield />, <Ever />, <RedBurst />, <Team />, <Usb />, <TrayFlag />, <Battery />, <Signal />, <Speaker />];

export default function App() {
  return (
    <Desktop>
      <Global />
      <Top>
        <Behind><BehindIcon /><BehindPanel /></Behind>
        <Win>
          <Strip>
            <ScrollBtn><Chevron dir="l" /></ScrollBtn>
            <TabsClip>
              {tabs.map((x, i) => (
                <Tab key={i} $active={x.active}>
                  {x.i}
                  <TabText $active={x.active}>{x.t}</TabText>
                  {x.active && <Cross />}
                </Tab>
              ))}
            </TabsClip>
            <TabTools><Chevron dir="r" /><Plus /><Chevron dir="d" /></TabTools>
            <WinBtns>
              <WinBtn $w={40}><svg width="16" height="14"><rect width="16" height="3" fill="#233f40" y="11" /></svg></WinBtn>
              <WinBtn $w={40}><svg width="18" height="14" fill="none" stroke="#233f40"><rect x="1" y="1" width="16" height="12" strokeWidth="2" /></svg></WinBtn>
              <WinBtn $w={67} $close><svg width="14" height="14" stroke="#fff" strokeWidth="1.8"><path d="M1 1l12 12M13 1 1 13" /></svg></WinBtn>
            </WinBtns>
          </Strip>
          <Body>
            <NavBar>
              <BackCircle><Arrow /></BackCircle>
              <NavIcons><Arrow c="#b1b1b3" flip /><Reload /><Home /></NavIcons>
              <Field $w={919}>
                <UrlIcons><Info /><Lock /></UrlIcons>
                <UrlText>https://<UrlHost>acloud.guru</UrlHost>/exam-simulator/review?attemptId=d9bd00</UrlText>
                <Zoom>70%</Zoom>
                <VDivider />
                <UrlTail><Dots /><Pocket /><Star /></UrlTail>
              </Field>
              <SearchGap />
              <Field $w={173}>
                <UrlIcons><Magnifier /><SearchLabel>Search</SearchLabel></UrlIcons>
              </Field>
              <ToolIcons>
                <ToolWrap><Wrench /></ToolWrap>
                <ToolWrap><Library /></ToolWrap>
                <ToolWrap><UBlock /><Badge>14</Badge></ToolWrap>
                <ToolWrap><Sun /></ToolWrap>
                <ToolWrap><Sidebar /></ToolWrap>
                <ToolWrap><ReactIco /></ToolWrap>
                <ToolWrap><Cat /></ToolWrap>
                <ToolWrap><Spark /></ToolWrap>
                <ToolWrap><YT /></ToolWrap>
                <ToolSep />
                <ToolWrap><Burger /></ToolWrap>
              </ToolIcons>
            </NavBar>
            <BookBar>
              <MostVisited><Gear />Most Visited</MostVisited>
              {books.map((b) => <Book key={b}><Folder />{b}</Book>)}
            </BookBar>
            <View>
              <Page>
                <Hero>
                  <Ghost>98%</Ghost>
                  <Title>You scored 98%</Title>
                  <Sub>You answered <SubStrong>59</SubStrong> of <SubStrong>60</SubStrong> questions correctly in <SubStrong>20:04</SubStrong></Sub>
                  <Share>SHARE RESULTS <FaShareAlt size={13} /></Share>
                </Hero>
                <Cards>
                  <Card $h={156}>
                    <Label>01 - QUICK TIPS</Label>
                    <Tips>
                      <Tip>
                        <TipIcon $right={17}><FlagIcon /></TipIcon>
                        <div>
                          <TipHead>Remember to Flag!</TipHead>
                          <TipBody>If you're not sure about a question, flag it and move on. You<br />can then revisit it later on.</TipBody>
                        </div>
                      </Tip>
                      <Tip>
                        <TipIcon $right={15}><ClockIcon /></TipIcon>
                        <div>
                          <TipHead>You Finished Early!</TipHead>
                          <TipBody>Make sure to use your remaining time to go back and review<br />questions you weren't certain about.</TipBody>
                        </div>
                      </Tip>
                    </Tips>
                  </Card>
                  <Card $h={305}>
                    <Label>02 - RESULTS BY DOMAIN</Label>
                    <Rows>
                      {domains.map(([n, v], i) => (
                        <Row key={n} $odd={i % 2 === 0}>
                          <RowName>{n}</RowName>
                          <Track><Fill style={{ width: `${v}%` }} /></Track>
                          <Pct>{v.toFixed(1)}%</Pct>
                        </Row>
                      ))}
                    </Rows>
                  </Card>
                </Cards>
              </Page>
              <Scroll>
                <ScrollArrow><svg width="14" height="10" fill="none" stroke="#505050" strokeWidth="2.6"><path d="M1 8l6-6 6 6" /></svg></ScrollArrow>
                <Thumb />
                <ScrollArrow><svg width="14" height="10" fill="none" stroke="#505050" strokeWidth="2.6"><path d="M1 2l6 6 6-6" /></svg></ScrollArrow>
              </Scroll>
            </View>
          </Body>
        </Win>
      </Top>
      <Taskbar>
        {apps.map((a, i) => <Slot key={i} $on={a.on}>{a.n}</Slot>)}
        <Tray>{tray.map((t, i) => <TraySlot key={i}>{t}</TraySlot>)}</Tray>
        <Clock>22:43<br />08/07/2018</Clock>
      </Taskbar>
    </Desktop>
  );
}
